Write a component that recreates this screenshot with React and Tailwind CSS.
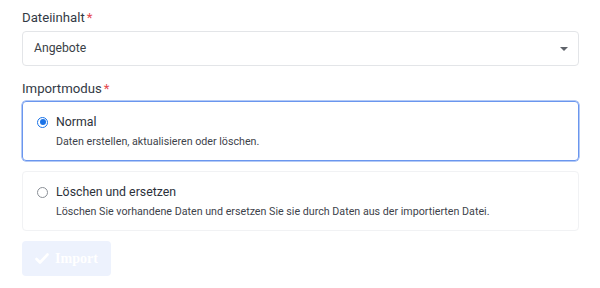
import React, { useState } from "react";

const modes = [
    {
        id: "normal",
        title: "Normal",
        detail: "Daten erstellen, aktualisieren oder löschen.",
    },
    {
        id: "replace",
        title: "Löschen und ersetzen",
        detail:
            "Löschen Sie vorhandene Daten und ersetzen Sie sie durch Daten aus der importierten Datei.",
    },
];

function Label({ children }) {
    return (
        <div className="text-[13.2px] leading-[20px] text-[#333a45]">
            {children}
            <span className="text-[#e5484d] ml-[2px]">*</span>
        </div>
    );
}

export default function App() {
    const [mode, setMode] = useState("normal");

    return (
        <div
            className="bg-white w-[600px] h-[288px] pl-[22px] pr-[21px] pt-[8px]"
            style={{ fontFamily: "Roboto, 'Noto Sans', sans-serif" }}
        >
            <Label>Dateiinhalt</Label>
            <div className="mt-[3px] h-[35px] border border-[#e3e5e8] rounded-[4px] flex items-center justify-between pl-[11px] pr-[10px]">
                <span className="text-[12.2px] text-[#3a3f47]">Angebote</span>
                <svg width="8" height="4" viewBox="0 0 8 4">
                    <path d="M0 0h8L4 4z" fill="#5f636a" />
                </svg>
            </div>

            <div className="mt-[13px]">
                <Label>Importmodus</Label>
            </div>

            <div className="mt-[2px] flex flex-col gap-[10px]">
                {modes.map((m) => {
                    const active = mode === m.id;
                    return (
                        <label
                            key={m.id}
                            onClick={() => setMode(m.id)}
                            className={
                                "block h-[60px] rounded-[4px] px-[14px] pt-[10px] cursor-pointer border " +
                                (active
                                    ? "border-[#6a96ee] shadow-[0_0_0_0.5px_#6a96ee]"
                                    : "border-[#f1f2f4]")
                            }
                        >
                            <div className="flex items-center gap-[8px]">
                                {active ? (
                                    <span className="w-[11px] h-[11px] rounded-full border-[1.5px] border-[#1a73e8] flex items-center justify-center">
                                        <span className="w-[6px] h-[6px] rounded-full bg-[#1a73e8]" />
                                    </span>
                                ) : (
                                    <span className="w-[11px] h-[11px] rounded-full border border-[#8a8f96]" />
                                )}
                                <span className="text-[12.3px] leading-[20px] text-[#2c313a]">
                                    {m.title}
                                </span>
                            </div>
                            <div className="pl-[19px] mt-[2px] text-[10.7px] leading-[16px] text-[#3e434b]">
                                {m.detail}
                            </div>
                        </label>
                    );
                })}
            </div>

            <button
                disabled
                className="mt-[10px] w-[89px] h-[35px] rounded-[4px] bg-[#edf2fd] flex items-center justify-center gap-[6px] text-white text-[14px] font-bold"
                style={{ fontFamily: "'Liberation Serif', serif" }}
            >
                <svg width="14" height="11" viewBox="0 0 14 11">
                    <path
                        d="M1.5 6l3.5 3.5L12.5 1.5"
                        stroke="#fff"
                        strokeWidth="2.6"
                        fill="none"
                        strokeLinecap="round"
                        strokeLinejoin="round"
                    />
                </svg>
                Import
            </button>
        </div>
    );
}
